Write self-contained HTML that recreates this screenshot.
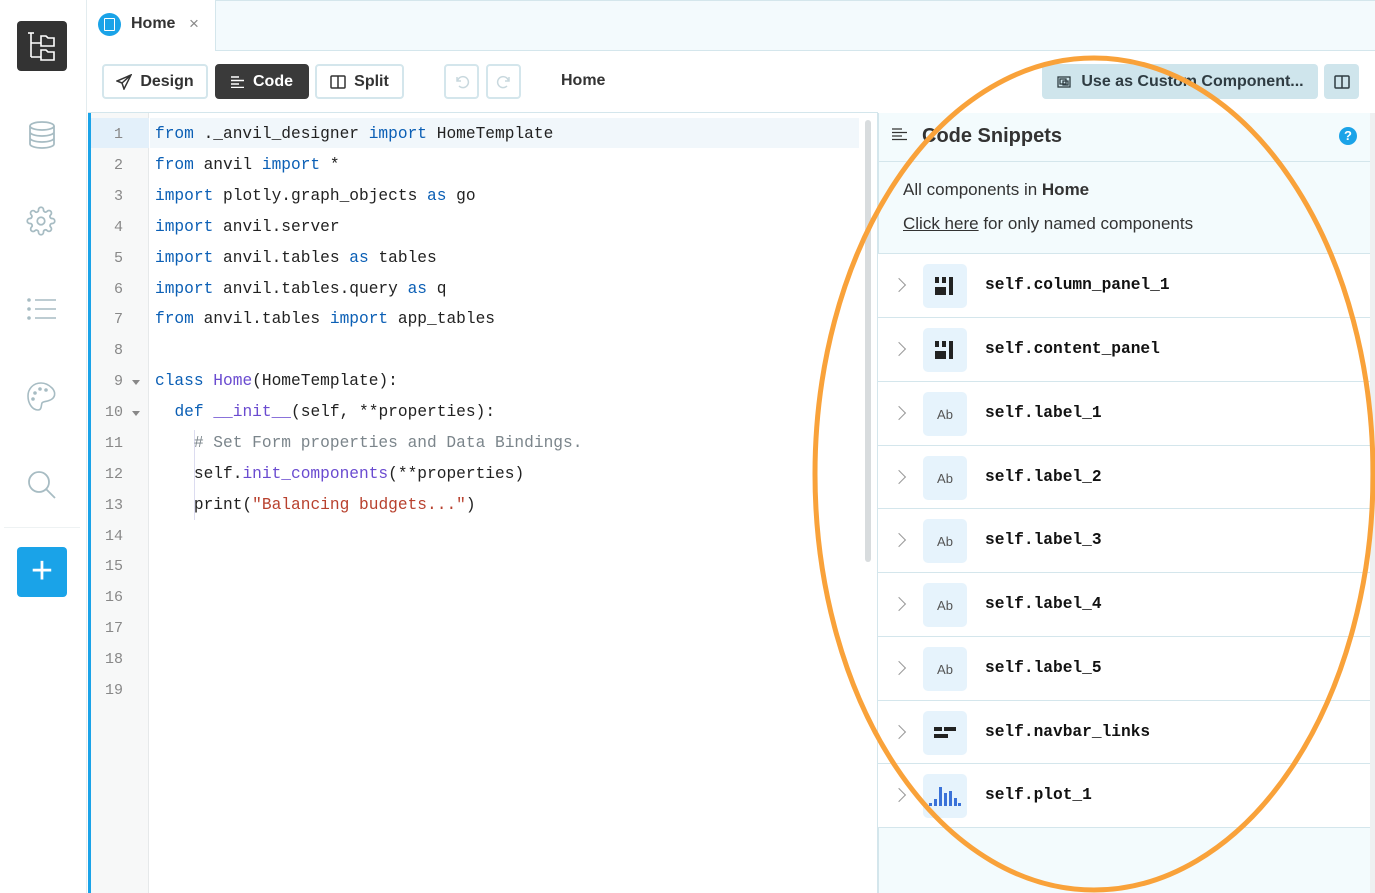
<!DOCTYPE html>
<html><head><meta charset="utf-8"><style>
*{box-sizing:border-box;margin:0;padding:0}
body{width:1375px;height:893px;overflow:hidden;background:#fff;font-family:"Liberation Sans",sans-serif;position:relative;color:#333}
.abs{position:absolute}
.side{left:0;top:0;width:87px;height:893px;background:#fff;border-right:1px solid #e3ecef}
.topbar{left:88px;top:0;width:1287px;height:51px;background:#f3fafd;border-bottom:1px solid #d4e6ec;border-top:1px solid #d4e6ec}
.tab{left:88px;top:0;width:128px;height:51px;background:#fff;border-right:1px solid #d4e6ec}
.btn{top:64px;height:35px;border:2px solid #d4e6ec;border-radius:4px;background:#fff;font-weight:bold;font-size:16px;color:#333;display:flex;align-items:center;justify-content:center;gap:8px}
.ln{position:absolute;left:91px;width:58px;text-align:right;padding-right:26px;color:#888;font-family:"Liberation Mono",monospace;font-size:15px}
.code{position:absolute;left:155px;white-space:pre;font-family:"Liberation Mono",monospace;font-size:16.2px;color:#222}
.k{color:#0b5fb5}.f{color:#6a4bd0}.s{color:#b8412e}.c{color:#7b858b}
.row{position:absolute;left:878px;width:492px;height:64px;background:#fff}
.hl{position:absolute;left:878px;width:492px;border-top:1px solid #d4e6ec}
.row .chev{position:absolute;left:16px;top:26px;width:10px;height:10px;border-right:1.5px solid #999;border-top:1.5px solid #999;transform:rotate(45deg)}
.row .ic{position:absolute;left:45px;top:10px;width:44px;height:44px;background:#e6f3fc;border-radius:5px;display:flex;align-items:center;justify-content:center;font-size:13px;color:#555}
.row .t{position:absolute;left:107px;top:22px;font-family:"Liberation Mono",monospace;font-size:16.2px;font-weight:bold;color:#111}
</style></head><body>
<div class="abs side"></div>
<div class="abs" style="left:17px;top:21px;width:50px;height:50px;background:#333;border-radius:4px">
<svg width="50" height="50" viewBox="0 0 50 50" fill="none" stroke="#fff" stroke-width="1.6"><path d="M14 12v24M14 22h10M14 36h10"/><path d="M24 15h5l2 2h6v8H24z"/><path d="M24 29h5l2 2h6v8H24z"/><path d="M11 12h6"/></svg></div>
<svg class="abs" style="left:26px;top:119px" width="32" height="32" viewBox="0 0 32 32" fill="none" stroke="#a7bcc3" stroke-width="1.8"><ellipse cx="16" cy="7" rx="12" ry="4"/><path d="M4 7v18c0 2.2 5.4 4 12 4s12-1.8 12-4V7M4 13c0 2.2 5.4 4 12 4s12-1.8 12-4M4 19c0 2.2 5.4 4 12 4s12-1.8 12-4"/></svg>
<svg class="abs" style="left:26px;top:206px" width="30" height="30" viewBox="0 0 24 24" fill="none" stroke="#a7bcc3" stroke-width="1.4"><circle cx="12" cy="12" r="3"/><path d="M19.4 15a1.65 1.65 0 0 0 .33 1.820l.06.06a2 2 0 1 1-2.83 2.83l-.06-.06a1.65 1.65 0 0 0-2.9 1.17V21a2 2 0 1 1-4 0v-.09A1.65 1.65 0 0 0 9 19.4a1.65 1.65 0 0 0-1.82.33l-.06.06a2 2 0 1 1-2.83-2.830l.06-.06A1.65 1.65 0 0 0 3.1 14H3a2 2 0 1 1 0-4h.09A1.65 1.65 0 0 0 4.6 9a1.65 1.65 0 0 0-.33-1.82l-.06-.06a2 2 0 1 1 2.83-2.83l.06.06A1.65 1.65 0 0 0 10 3.1V3a2 2 0 1 1 4 0v.09a1.65 1.65 0 0 0 2.9 1.17l.06-.06a2 2 0 1 1 2.83 2.83l-.06.06A1.65 1.65 0 0 0 20.9 10H21a2 2 0 1 1 0 4h-.09a1.65 1.65 0 0 0-1.51 1z"/></svg>
<svg class="abs" style="left:26px;top:297px" width="32" height="24" viewBox="0 0 32 24" fill="none" stroke="#a7bcc3" stroke-width="1.6"><circle cx="3" cy="3" r="1" fill="#a7bcc3"/><circle cx="3" cy="12" r="1" fill="#a7bcc3"/><circle cx="3" cy="21" r="1" fill="#a7bcc3"/><path d="M9 3h21M9 12h21M9 21h21"/></svg>
<svg class="abs" style="left:26px;top:381px" width="31" height="31" viewBox="0 0 31 31" fill="none" stroke="#a7bcc3" stroke-width="1.6"><path d="M15 2C7 2 2 8 2 15s4 14 10 14c4 0 3-5 4-7s6-1 10-4 3-8 0-11S20 2 15 2z"/><circle cx="9" cy="12" r="1" fill="#a7bcc3"/><circle cx="14" cy="8" r="1" fill="#a7bcc3"/><circle cx="20" cy="9" r="1" fill="#a7bcc3"/><circle cx="7" cy="18" r="1" fill="#a7bcc3"/></svg>
<svg class="abs" style="left:26px;top:469px" width="32" height="32" viewBox="0 0 32 32" fill="none" stroke="#a7bcc3" stroke-width="1.8"><circle cx="13" cy="13" r="10"/><path d="M20 20l9 9"/></svg>
<div class="abs" style="left:4px;top:527px;width:76px;border-top:1px solid #eef2f3"></div>
<div class="abs" style="left:17px;top:547px;width:50px;height:50px;background:#1aa3e8;border-radius:4px;color:#fff;font-size:38px;line-height:48px;text-align:center;font-weight:300">+</div>

<div class="abs topbar"></div>
<div class="abs tab"></div>
<div class="abs" style="left:98px;top:13px;width:23px;height:23px;border-radius:50%;background:#1aa3e8"></div>
<div class="abs" style="left:104px;top:18px;width:11px;height:13px;border:1px solid #fff;border-radius:1px"></div>
<div class="abs" style="left:131px;top:15px;font-size:16px;font-weight:bold;color:#333">Home</div>
<div class="abs" style="left:189px;top:14px;font-size:17px;color:#888">×</div>

<div class="abs btn" style="left:102px;width:106px"><svg width="16" height="16" viewBox="0 0 16 16" fill="none" stroke="#333" stroke-width="1.5"><path d="M15 1L1 7l5 2 2 6z M6 9l9-8"/></svg>Design</div>
<div class="abs btn" style="left:215px;width:94px;background:#3a3a3a;border-color:#3a3a3a;color:#fff"><svg width="14" height="12" viewBox="0 0 14 12" stroke="#fff" stroke-width="1.4"><path d="M0 1h8M0 4.5h13M0 8h8M0 11.5h13"/></svg>Code</div>
<div class="abs btn" style="left:315px;width:89px"><svg width="16" height="14" viewBox="0 0 16 14" fill="none" stroke="#333" stroke-width="1.5"><rect x="1" y="1" width="14" height="12" rx="1"/><path d="M8 1v12"/></svg>Split</div>
<div class="abs btn" style="left:444px;width:35px"><svg width="16" height="16" viewBox="0 0 16 16" fill="none" stroke="#c8d8de" stroke-width="1.5"><path d="M3 3v4h4M3.5 7A5.5 5.5 0 1 1 5 12"/></svg></div>
<div class="abs btn" style="left:486px;width:35px"><svg width="16" height="16" viewBox="0 0 16 16" fill="none" stroke="#c8d8de" stroke-width="1.5"><path d="M13 3v4H9M12.5 7A5.5 5.5 0 1 0 11 12"/></svg></div>
<div class="abs" style="left:561px;top:72px;font-size:16px;font-weight:bold;color:#333">Home</div>
<div class="abs" style="left:1042px;top:64px;width:276px;height:35px;background:#cfe5ec;border-radius:4px;display:flex;align-items:center;justify-content:center;gap:9px;font-weight:bold;font-size:16px;color:#2f3c42"><svg width="16" height="14" viewBox="0 0 16 14" fill="none" stroke="#2f3c42" stroke-width="1.3"><rect x="2" y="2" width="12" height="10"/><rect x="4" y="4" width="6" height="5"/><path d="M7 6h5v4H7z"/></svg>Use as Custom Component...</div>
<div class="abs" style="left:1324px;top:64px;width:35px;height:35px;background:#cfe5ec;border-radius:4px;display:flex;align-items:center;justify-content:center"><svg width="16" height="14" viewBox="0 0 16 14" fill="none" stroke="#2f3c42" stroke-width="1.5"><rect x="1" y="1" width="14" height="12" rx="1"/><path d="M8 1v12"/></svg></div>

<div class="abs" style="left:88px;top:112px;width:790px;border-top:1px solid #d4e6ec"></div>
<div class="abs" style="left:88px;top:113px;width:3px;height:780px;background:#1aa3e8"></div>
<div class="abs" style="left:91px;top:113px;width:58px;height:780px;background:#f7f8f8;border-right:1px solid #e6e9ea"></div>
<div class="abs" style="left:91px;top:118px;width:58px;height:30px;background:#e3f0fa"></div>
<div class="abs" style="left:150px;top:118px;width:709px;height:30px;background:#f1f7fb"></div>
<div class="abs" style="left:865px;top:120px;width:6px;height:442px;background:#d8dcde;border-radius:3px"></div>
<div class="abs" style="left:194px;top:430px;height:90px;border-left:1px solid #dcdcf0"></div>
<div class="ln" style="top:126px">1</div><div class="ln" style="top:157px">2</div><div class="ln" style="top:188px">3</div><div class="ln" style="top:219px">4</div><div class="ln" style="top:250px">5</div><div class="ln" style="top:281px">6</div><div class="ln" style="top:311px">7</div><div class="ln" style="top:342px">8</div><div class="ln" style="top:373px">9</div><div class="ln" style="top:404px">10</div><div class="ln" style="top:435px">11</div><div class="ln" style="top:466px">12</div><div class="ln" style="top:497px">13</div><div class="ln" style="top:528px">14</div><div class="ln" style="top:558px">15</div><div class="ln" style="top:589px">16</div><div class="ln" style="top:620px">17</div><div class="ln" style="top:651px">18</div><div class="ln" style="top:682px">19</div>
<div class="abs" style="left:132px;top:380px;border:4px solid transparent;border-top:5px solid #888"></div>
<div class="abs" style="left:132px;top:411px;border:4px solid transparent;border-top:5px solid #888"></div>
<div class="code" style="top:125px"><span class="k">from</span> ._anvil_designer <span class="k">import</span> HomeTemplate</div>
<div class="code" style="top:156px"><span class="k">from</span> anvil <span class="k">import</span> *</div>
<div class="code" style="top:187px"><span class="k">import</span> plotly.graph_objects <span class="k">as</span> go</div>
<div class="code" style="top:218px"><span class="k">import</span> anvil.server</div>
<div class="code" style="top:249px"><span class="k">import</span> anvil.tables <span class="k">as</span> tables</div>
<div class="code" style="top:280px"><span class="k">import</span> anvil.tables.query <span class="k">as</span> q</div>
<div class="code" style="top:310px"><span class="k">from</span> anvil.tables <span class="k">import</span> app_tables</div>
<div class="code" style="top:372px"><span class="k">class</span> <span class="f">Home</span>(HomeTemplate):</div>
<div class="code" style="top:403px">  <span class="k">def</span> <span class="f">__init__</span>(self, **properties):</div>
<div class="code" style="top:434px">    <span class="c"># Set Form properties and Data Bindings.</span></div>
<div class="code" style="top:465px">    self.<span class="f">init_components</span>(**properties)</div>
<div class="code" style="top:496px">    print(<span class="s">"Balancing budgets..."</span>)</div>

<div class="abs" style="left:877px;top:113px;width:493px;height:780px;background:#f3fbfd;border-left:2px solid #d4e6ec"></div>
<div class="abs" style="left:1370px;top:113px;width:5px;height:780px;background:#eef0f1"></div>
<div class="abs" style="left:878px;top:161px;width:492px;border-top:1px solid #d4e6ec"></div>
<div class="abs" style="left:878px;top:253px;width:492px;border-top:1px solid #d4e6ec"></div>
<svg class="abs" style="left:892px;top:128px" width="16" height="14" viewBox="0 0 16 14" stroke="#333" stroke-width="1.3"><path d="M0 1h10M0 4.5h15M0 8h10M0 11.5h15"/></svg>
<div class="abs" style="left:922px;top:125px;font-size:20px;font-weight:bold;color:#333">Code Snippets</div>
<div class="abs" style="left:1339px;top:127px;width:18px;height:18px;border-radius:50%;background:#1aa3e8;color:#fff;font-size:13px;font-weight:bold;text-align:center;line-height:18px">?</div>
<div class="abs" style="left:903px;top:180px;font-size:17px;color:#333">All components in <b>Home</b></div>
<div class="abs" style="left:903px;top:214px;font-size:17px;color:#333"><u>Click here</u> for only named components</div>

<div class="row" style="top:254px"><div class="chev"></div><div class="ic"><svg width="22" height="20" viewBox="0 0 22 20" fill="#222"><rect x="1" y="1" width="4" height="6"/><rect x="8" y="1" width="4" height="6"/><rect x="1" y="11" width="11" height="8"/><rect x="15" y="1" width="4" height="18"/></svg></div><div class="t">self.column_panel_1</div></div>
<div class="row" style="top:318px"><div class="chev"></div><div class="ic"><svg width="22" height="20" viewBox="0 0 22 20" fill="#222"><rect x="1" y="1" width="4" height="6"/><rect x="8" y="1" width="4" height="6"/><rect x="1" y="11" width="11" height="8"/><rect x="15" y="1" width="4" height="18"/></svg></div><div class="t">self.content_panel</div></div>
<div class="row" style="top:382px"><div class="chev"></div><div class="ic">Ab</div><div class="t">self.label_1</div></div>
<div class="row" style="top:446px"><div class="chev"></div><div class="ic">Ab</div><div class="t">self.label_2</div></div>
<div class="row" style="top:509px"><div class="chev"></div><div class="ic">Ab</div><div class="t">self.label_3</div></div>
<div class="row" style="top:573px"><div class="chev"></div><div class="ic">Ab</div><div class="t">self.label_4</div></div>
<div class="row" style="top:637px"><div class="chev"></div><div class="ic">Ab</div><div class="t">self.label_5</div></div>
<div class="row" style="top:701px"><div class="chev"></div><div class="ic"><svg width="22" height="14" viewBox="0 0 22 14" fill="#222"><rect x="0" y="1" width="8" height="4"/><rect x="10" y="1" width="12" height="4"/><rect x="0" y="8" width="14" height="4"/></svg></div><div class="t">self.navbar_links</div></div>
<div class="row" style="top:764px;height:63px"><div class="chev"></div><div class="ic"><svg width="32" height="22" viewBox="0 0 32 22" fill="#3b72d8"><rect x="0" y="18" width="3" height="3"/><rect x="5" y="14" width="3" height="7"/><rect x="10" y="2" width="3" height="19"/><rect x="15" y="8" width="3" height="13"/><rect x="20" y="6" width="3" height="15"/><rect x="25" y="13" width="3" height="8"/><rect x="29" y="18" width="3" height="3"/></svg></div><div class="t">self.plot_1</div></div>
<div class="hl" style="top:317px"></div><div class="hl" style="top:381px"></div><div class="hl" style="top:445px"></div><div class="hl" style="top:508px"></div><div class="hl" style="top:572px"></div><div class="hl" style="top:636px"></div><div class="hl" style="top:700px"></div><div class="hl" style="top:763px"></div><div class="hl" style="top:827px"></div>

<svg class="abs" style="left:0;top:0" width="1375" height="893"><ellipse cx="1094" cy="474" rx="279" ry="416" fill="none" stroke="#f9a23a" stroke-width="5"/></svg>
</body></html>
